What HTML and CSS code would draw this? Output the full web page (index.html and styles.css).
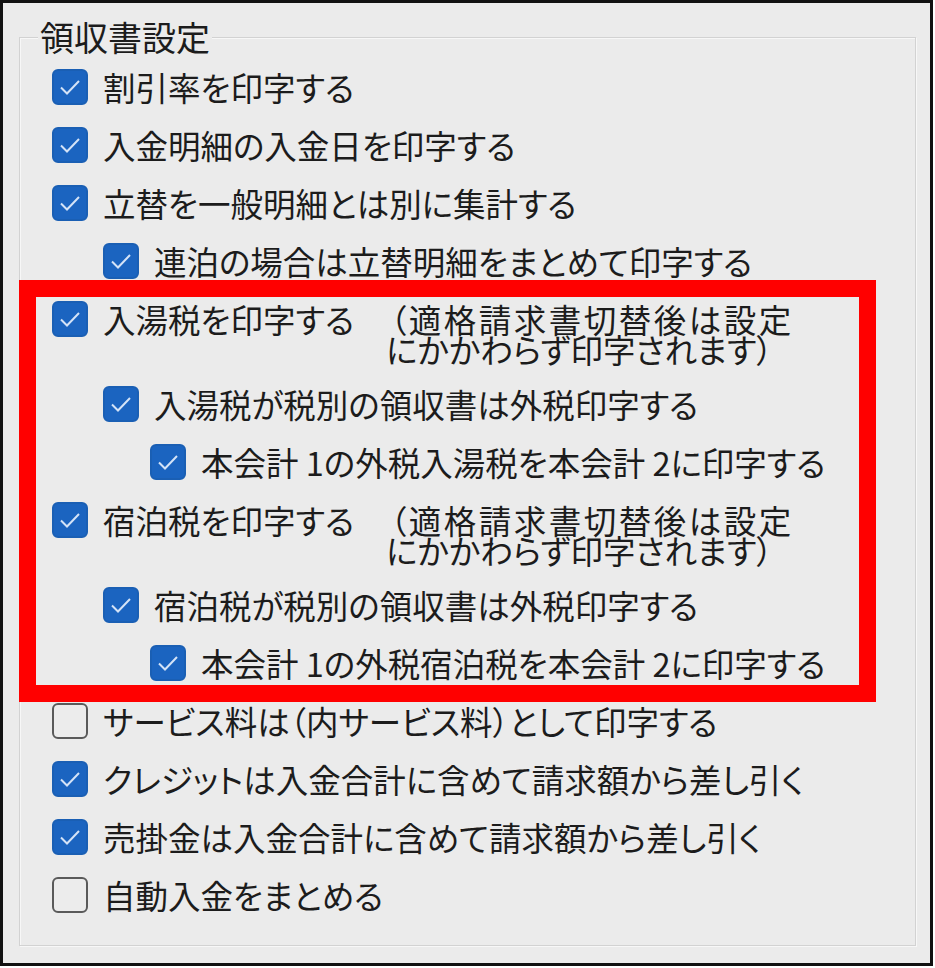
FILE: index.html
```html
<!DOCTYPE html>
<html lang="ja">
<head>
    <meta charset="UTF-8">
    <title>領収書設定</title>
    <link rel="stylesheet" href="styles.css">
</head>
<body>
    <div class="frame">
        <fieldset class="group">
            <legend>領収書設定</legend>
            <ul class="options">
                <li class="opt"><span class="box on"><svg viewBox="0 0 32 32"><polyline points="7,16.5 13,22.5 25,10"/></svg></span><span class="label">割引率を印字する</span></li>
                <li class="opt"><span class="box on"><svg viewBox="0 0 32 32"><polyline points="7,16.5 13,22.5 25,10"/></svg></span><span class="label">入金明細の入金日を印字する</span></li>
                <li class="opt"><span class="box on"><svg viewBox="0 0 32 32"><polyline points="7,16.5 13,22.5 25,10"/></svg></span><span class="label">立替を一般明細とは別に集計する</span></li>
                <li class="opt lv1"><span class="box on"><svg viewBox="0 0 32 32"><polyline points="7,16.5 13,22.5 25,10"/></svg></span><span class="label">連泊の場合は立替明細をまとめて印字する</span></li>
                <li class="opt"><span class="box on"><svg viewBox="0 0 32 32"><polyline points="7,16.5 13,22.5 25,10"/></svg></span>
                    <span class="label">
                        <span>入湯税を印字する</span>
                        <span class="note"><span class="first">（適格請求書切替後は設定</span><span class="wrap">にかかわらず印字されます）</span></span>
                    </span>
                </li>
                <li class="opt lv1"><span class="box on"><svg viewBox="0 0 32 32"><polyline points="7,16.5 13,22.5 25,10"/></svg></span><span class="label">入湯税が税別の領収書は外税印字する</span></li>
                <li class="opt lv2"><span class="box on"><svg viewBox="0 0 32 32"><polyline points="7,16.5 13,22.5 25,10"/></svg></span><span class="label">本会計 1の外税入湯税を本会計 2に印字する</span></li>
                <li class="opt"><span class="box on"><svg viewBox="0 0 32 32"><polyline points="7,16.5 13,22.5 25,10"/></svg></span>
                    <span class="label">
                        <span>宿泊税を印字する</span>
                        <span class="note"><span class="first">（適格請求書切替後は設定</span><span class="wrap">にかかわらず印字されます）</span></span>
                    </span>
                </li>
                <li class="opt lv1"><span class="box on"><svg viewBox="0 0 32 32"><polyline points="7,16.5 13,22.5 25,10"/></svg></span><span class="label">宿泊税が税別の領収書は外税印字する</span></li>
                <li class="opt lv2"><span class="box on"><svg viewBox="0 0 32 32"><polyline points="7,16.5 13,22.5 25,10"/></svg></span><span class="label">本会計 1の外税宿泊税を本会計 2に印字する</span></li>
                <li class="opt"><span class="box"></span><span class="label">サービス料は（内サービス料）として印字する</span></li>
                <li class="opt"><span class="box on"><svg viewBox="0 0 32 32"><polyline points="7,16.5 13,22.5 25,10"/></svg></span><span class="label">クレジットは入金合計に含めて請求額から差し引く</span></li>
                <li class="opt"><span class="box on"><svg viewBox="0 0 32 32"><polyline points="7,16.5 13,22.5 25,10"/></svg></span><span class="label">売掛金は入金合計に含めて請求額から差し引く</span></li>
                <li class="opt"><span class="box"></span><span class="label">自動入金をまとめる</span></li>
            </ul>
        </fieldset>
        <div class="callout"></div>
    </div>
</body>
</html>
```

FILE: styles.css
```css
body {
    margin: 0;
    background-color: #fff;
    font-family: "Noto Sans CJK JP", "Noto Sans", sans-serif;
    color: #1c1c1c;
}
.frame {
    position: relative;
    box-sizing: border-box;
    width: 933px;
    height: 966px;
    border: 3px solid #111;
    background-color: #ebebeb;
    display: flex;
    flex-direction: column;
    padding: 17px 14px 17px 16px;
}
.group {
    flex: 1;
    margin: 0;
    padding: 4px 0 0 32px;
    border: 1px solid #d2d2d2;
    box-shadow: 1px 1px 0 #f7f7f7, inset 1px 1px 0 #f7f7f7;
}
.group legend {
    margin-left: -14px;
    padding: 0 2px;
    font-size: 34px;
    line-height: 34px;
    background-color: #ebebeb;
}
.options {
    list-style: none;
    margin: 0;
    padding: 0;
}
.opt {
    display: flex;
    align-items: flex-start;
    gap: 15px;
    padding: 11px 0;
    font-size: 32.5px;
    font-feature-settings: "palt";
}
.opt.lv1 {
    padding-left: 51px;
}
.opt.lv2 {
    padding-left: 98px;
}
.box {
    flex: none;
    box-sizing: border-box;
    width: 36px;
    height: 36px;
    border: 2px solid #5a5a5a;
    border-radius: 6px;
    background-color: #ececec;
}
.box.on {
    border-color: #1a5fb4;
    background-color: #1b64c0;
}
.box svg {
    display: block;
    width: 32px;
    height: 32px;
}
.box polyline {
    fill: none;
    stroke: #d4e3f7;
    stroke-width: 2;
}
.label {
    display: flex;
    gap: 36px;
    margin-top: 3px;
    line-height: 30px;
    white-space: nowrap;
}
.note {
    display: flex;
    flex-direction: column;
}
.note .first {
    letter-spacing: 2.5px;
}
.note .wrap {
    margin-left: -4px;
}
/* 赤枠 */
.callout {
    position: absolute;
    left: 16px;
    top: 277px;
    box-sizing: border-box;
    width: 857px;
    height: 422px;
    border: 17px solid #ff0000;
}
```
